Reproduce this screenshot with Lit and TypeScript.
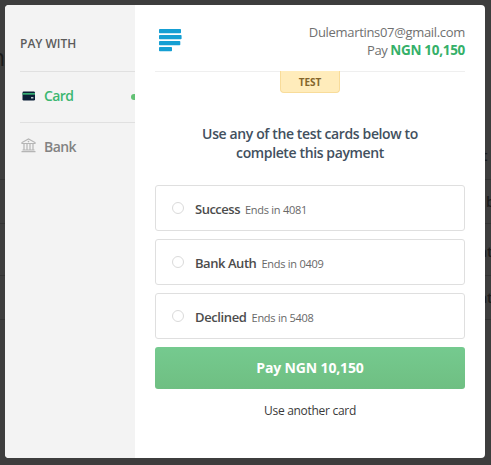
import { LitElement, html, css, svg } from "lit";
import { customElement, property } from "lit/decorators.js";

interface TestCard {
  name: string;
  digits: string;
  kind: string;
}

const cards: TestCard[] = [
  { name: "Success", digits: "4081", kind: "success" },
  { name: "Bank Auth", digits: "0409", kind: "auth" },
  { name: "Declined", digits: "5408", kind: "declined" },
];

@customElement("test-card-option")
export class TestCardOption extends LitElement {
  @property({ attribute: false }) card!: TestCard;

  static styles = css`
    :host { display: block; }
    .option {
      box-sizing: border-box;
      height: 46px;
      display: flex;
      align-items: center;
      padding: 1px 16px 0;
      border: 1px solid #dfdfdf;
      border-radius: 3px;
      background: #fff;
    }
    .radio {
      box-sizing: border-box;
      width: 12px;
      height: 12px;
      margin-right: 11px;
      margin-top: -2px;
      border: 1px solid #dadada;
      border-radius: 50%;
    }
    .label { display: flex; align-items: baseline; white-space: nowrap; }
    .name { font-size: 13px; font-weight: 600; color: #4c4c4c; margin-right: 5px; }
    .success { letter-spacing: -0.5px; }
    .auth { letter-spacing: -0.45px; }
    .declined { letter-spacing: -0.38px; }
    .ends { font-size: 11px; letter-spacing: -0.26px; color: #686868; }
  `;

  render() {
    return html`
      <div class="option">
        <span class="radio"></span>
        <span class="label">
          <span class="name ${this.card.kind}">${this.card.name}</span>
          <span class="ends">Ends in ${this.card.digits}</span>
        </span>
      </div>
    `;
  }
}

const cardIcon = svg`
  <rect x="0.5" y="0.5" width="12.5" height="9" rx="1.2" fill="#0b1f36"/>
  <rect x="0.5" y="2" width="12.5" height="1.7" fill="#35ab72"/>
  <rect x="9" y="6.2" width="2.4" height="1.2" fill="#e4eeee"/>`;

const bankIcon = svg`
  <path d="M1 5.5V4.5L7.5 1L14 4.5V5.5Z M3 5.5V12 M6 5.5V12 M9 5.5V12 M12 5.5V12 M1.5 12H13.5 M0.5 13.6H14.5"
    fill="none" stroke="#b5b5b5" stroke-width="1.2"/>
  <circle cx="7.5" cy="3.6" r="0.8" fill="#b5b5b5"/>`;

@customElement("app-root")
export class AppRoot extends LitElement {
  static styles = css`
    :host {
      display: block;
      position: relative;
      box-sizing: border-box;
      width: 491px;
      height: 465px;
      padding: 5px 6px 7px 5px;
      overflow: hidden;
      background: #3d3d3d;
      font-family: "Open Sans", "Noto Sans", sans-serif;
    }
    .behind { position: absolute; color: #1b1b1b; font-size: 14px; line-height: 18px; font-weight: 600; }
    .title { left: -9px; top: 44px; font-size: 23px; line-height: 26px; font-weight: 400; }
    .rule { position: absolute; left: 0; width: 491px; height: 1px; background: #333; }
    .r1 { top: 179px; }
    .r2 { top: 223px; }
    .r3 { top: 275px; }
    .r4 { top: 319px; }
    .b1 { left: 482px; top: 147px; }
    .b2 { left: 486px; top: 193px; }
    .b3 { left: 479px; top: 243px; }
    .b4 { left: 479px; top: 289px; }
    .modal {
      position: relative;
      height: 453px;
      display: flex;
      border-radius: 4px;
      overflow: hidden;
      background: #fff;
    }
    .side {
      box-sizing: border-box;
      width: 130px;
      padding-left: 15px;
      background: #f3f3f3;
      overflow: hidden;
      flex: none;
    }
    .heading {
      height: 66px;
      box-sizing: border-box;
      padding-top: 29px;
      font-size: 12px;
      line-height: 20px;
      font-weight: 600;
      letter-spacing: 0;
      color: #5b5b5b;
      white-space: nowrap;
    }
    .channel {
      box-sizing: border-box;
      height: 51px;
      display: flex;
      align-items: center;
      border-top: 1px solid #e0e0e0;
      font-size: 14px;
      font-weight: 600;
      letter-spacing: -0.6px;
      color: #828282;
    }
    .channel svg { flex: none; }
    .channel-name { margin-top: -3px; }
    .active { color: #3bb771; }
    .card-icon { width: 14px; height: 10px; margin: 0 8px 3px 2px; }
    .bank-icon { width: 15px; height: 15px; margin: 0 8px 6px 1px; }
    .dot { width: 6px; height: 6px; border-radius: 50%; background: #62c174; margin: 0 -2px 1px auto; }
    .main {
      flex: 1;
      min-width: 0;
      padding: 0 20px;
      display: flex;
      flex-direction: column;
    }
    .header {
      box-sizing: border-box;
      height: 67px;
      display: flex;
      justify-content: space-between;
      padding-top: 18px;
      border-bottom: 1px solid #efefef;
      flex: none;
    }
    .logo { width: 23px; height: 24px; margin: 5px 0 0 4px; }
    .payer {
      text-align: right;
      font-size: 13px;
      line-height: 18px;
      color: #707070;
      white-space: nowrap;
    }
    .email { letter-spacing: -0.32px; }
    .total { letter-spacing: -0.4px; }
    .total b { color: #35b069; font-size: 13.5px; font-weight: 700; letter-spacing: -0.3px; }
    .badge {
      box-sizing: border-box;
      align-self: center;
      width: 60px;
      height: 22px;
      margin-top: -1px;
      border: 1px solid #f8dc9a;
      border-top: 0;
      border-radius: 0 0 4px 4px;
      background: #ffecbb;
      color: #84652b;
      font-size: 10px;
      line-height: 22px;
      font-weight: 700;
      letter-spacing: -0.1px;
      text-align: center;
      flex: none;
    }
    .prompt {
      margin: 31px 0 22px;
      height: 39px;
      color: #42505e;
      font-size: 14px;
      line-height: 19px;
      font-weight: 600;
      letter-spacing: -0.38px;
      text-align: center;
      white-space: nowrap;
    }
    .options { display: grid; gap: 8px; }
    .pay {
      margin-top: 8px;
      height: 42px;
      border: 0;
      padding: 0 0 1px;
      border-radius: 3px;
      background: linear-gradient(#75ca8f, #6fbf82);
      color: #fff;
      font: 700 14px "Open Sans", "Noto Sans", sans-serif;
      letter-spacing: -0.15px;
      flex: none;
    }
    .another {
      margin-top: 13px;
      font-size: 12px;
      line-height: 18px;
      font-weight: 500;
      letter-spacing: -0.29px;
      text-align: center;
      color: #3a3a3a;
    }
  `;

  render() {
    return html`
      <div class="rule r1"></div>
      <div class="rule r2"></div>
      <div class="rule r3"></div>
      <div class="rule r4"></div>
      <span class="behind title">n</span>
      <span class="behind b1">t</span>
      <span class="behind b2">b</span>
      <span class="behind b3">at</span>
      <span class="behind b4">at</span>
      <div class="modal">
        <aside class="side">
          <div class="heading">PAY WITH</div>
          <div class="channel active">
            <svg class="card-icon" viewBox="0 0 14 10">${cardIcon}</svg>
            <span class="channel-name">Card</span>
            <span class="dot"></span>
          </div>
          <div class="channel">
            <svg class="bank-icon" viewBox="0 0 15 15">${bankIcon}</svg>
            <span class="channel-name">Bank</span>
          </div>
        </aside>
        <main class="main">
          <header class="header">
            <svg class="logo" viewBox="0 0 23 24" fill="#159fd3">
              <rect x="0" y="1" width="22" height="4.2" rx="0.8" />
              <rect x="0" y="7" width="22.6" height="4.2" rx="0.8" />
              <rect x="0" y="13" width="21.3" height="4.2" rx="0.8" />
              <rect x="0" y="19" width="13" height="4.2" rx="0.8" />
            </svg>
            <div class="payer">
              <div class="email">Dulemartins07@gmail.com</div>
              <div class="total">Pay <b>NGN 10,150</b></div>
            </div>
          </header>
          <div class="badge">TEST</div>
          <div class="prompt">Use any of the test cards below to<br />complete this payment</div>
          <div class="options">
            ${cards.map((card) => html`<test-card-option .card=${card}></test-card-option>`)}
          </div>
          <button class="pay">Pay NGN 10,150</button>
          <div class="another">Use another card</div>
        </main>
      </div>
    `;
  }
}
